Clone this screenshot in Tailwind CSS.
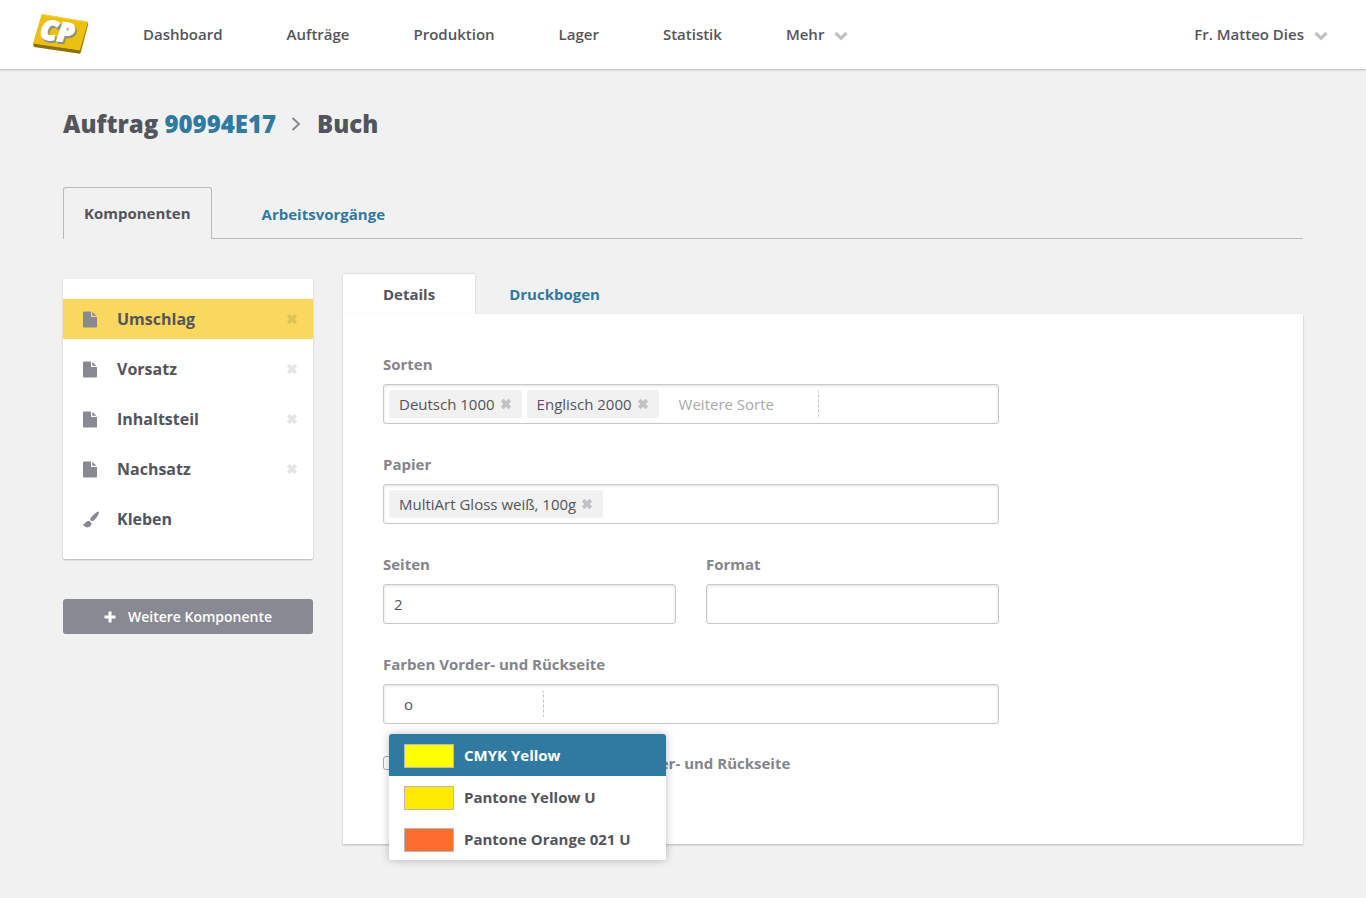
<!DOCTYPE html>
<html lang="de">
<head>
<meta charset="utf-8">
<meta name="viewport" content="width=device-width, initial-scale=1">
<title>Auftrag 90994E17 – Buch</title>
<script src="https://cdn.jsdelivr.net/npm/@tailwindcss/browser@4"></script>
</head>
<body class="min-h-screen bg-[#f1f1f1] font-['Open_Sans',sans-serif] text-[15px] leading-5 text-[#54545c]">

<svg class="hidden" aria-hidden="true">
  <symbol id="x" viewBox="0 0 11 11"><path d="M2 2l7 7M9 2l-7 7" fill="none" stroke="currentColor" stroke-width="3.4"/></symbol>
  <symbol id="chevron" viewBox="0 0 14 10"><path d="M1.500 2L7 7.300L12.500 2" fill="none" stroke="currentColor" stroke-width="3.200"/></symbol>
  <symbol id="doc" viewBox="0 0 14 17"><path d="M1 0.500h7v5.500h6v9.500a1 1 0 0 1-1 1H1a1 1 0 0 1-1-1V1.500a1 1 0 0 1 1-1z" fill="currentColor"/><path d="M9.300 0.800v4h4.200z" fill="currentColor"/></symbol>
</svg>

<header class="flex h-[69px] items-center bg-white pr-[38px] pb-0.5 pl-8 font-semibold shadow-[0_1px_2px_rgba(0,0,0,0.25)]">
  <a href="#" aria-label="CP" class="mr-[54px]">
    <svg class="block h-11 w-[57px]" viewBox="32 12 57 44">
      <polygon points="33,43 80,50 80,53.800 34,47" fill="#8a7100"/>
      <polygon points="87.500,21.700 88.300,24 80.500,53.800 79.300,50" fill="#a38500"/>
      <polygon points="41.700,14 88,21.700 79.800,50.300 33,43.500" fill="#ebc012"/>
      <path d="M42 14.500L87.500 22" stroke="#f5d64c" stroke-width="1"/>
      <g font-family="Open Sans, sans-serif" font-weight="800" font-style="italic" font-size="27" transform="rotate(7 60 32)">
        <text x="42" y="43" fill="#8d8d90" stroke="#8d8d90" stroke-width="1.500">CP</text>
        <text x="40.500" y="41.200" fill="#fff" stroke="#fff" stroke-width="1.200">CP</text>
      </g>
    </svg>
  </a>
  <nav class="flex gap-16">
    <a href="#">Dashboard</a>
    <a href="#">Aufträge</a>
    <a href="#">Produktion</a>
    <a href="#">Lager</a>
    <a href="#">Statistik</a>
    <a href="#" class="flex items-center gap-2.5">Mehr <svg class="mt-1 h-2.5 w-3.5 text-[#c0c0c5]"><use href="#chevron"/></svg></a>
  </nav>
  <button type="button" class="ml-auto flex items-center gap-2.5 font-semibold">Fr. Matteo Dies <svg class="mt-1 h-2.5 w-3.5 text-[#c0c0c5]"><use href="#chevron"/></svg></button>
</header>

<main class="px-[63px] pt-[39px] pb-[53px]">
  <h1 class="flex items-center text-2xl font-extrabold">
    <span>Auftrag <a href="#" class="text-[#3079a1]">90994E17</a></span>
    <svg class="mr-4 ml-[15px] h-4 w-2.5" viewBox="0 0 10 16" fill="none" stroke="#84848d" stroke-width="1.800"><path d="M1.500 2l6.500 6-6.500 6"/></svg>
    <span>Buch</span>
  </h1>

  <nav class="mt-[47px] flex font-bold">
    <a href="#" class="flex h-[52px] items-center rounded-t-[3px] border border-b-0 border-[#b9b9b9] px-5 pb-0.5">Komponenten</a>
    <div class="flex grow items-center border-b border-[#b9b9b9] pt-0.5 pl-[50px]"><a href="#" class="text-[#3079a1]">Arbeitsvorgänge</a></div>
  </nav>

  <div class="mt-[35px] flex items-start gap-[30px]">
    <aside class="mt-[5px] w-[250px] shrink-0">
      <ul class="flex flex-col gap-2.5 rounded-xs bg-white py-5 text-base font-bold shadow-[0_1px_2px_rgba(0,0,0,0.25)]">
        <li class="flex h-10 items-center bg-[#fad860] px-5"><svg class="mr-5 h-[17px] w-3.5 text-[#898993]"><use href="#doc"/></svg><a href="#" class="grow">Umschlag</a><button type="button" aria-label="Umschlag entfernen" class="-mr-[5px]"><svg class="size-3 text-[#e1c256]"><use href="#x"/></svg></button></li>
        <li class="flex h-10 items-center px-5"><svg class="mr-5 h-[17px] w-3.5 text-[#898993]"><use href="#doc"/></svg><a href="#" class="grow">Vorsatz</a><button type="button" aria-label="Vorsatz entfernen" class="-mr-[5px]"><svg class="size-3 text-[#e5e5e5]"><use href="#x"/></svg></button></li>
        <li class="flex h-10 items-center px-5"><svg class="mr-5 h-[17px] w-3.5 text-[#898993]"><use href="#doc"/></svg><a href="#" class="grow">Inhaltsteil</a><button type="button" aria-label="Inhaltsteil entfernen" class="-mr-[5px]"><svg class="size-3 text-[#e5e5e5]"><use href="#x"/></svg></button></li>
        <li class="flex h-10 items-center px-5"><svg class="mr-5 h-[17px] w-3.5 text-[#898993]"><use href="#doc"/></svg><a href="#" class="grow">Nachsatz</a><button type="button" aria-label="Nachsatz entfernen" class="-mr-[5px]"><svg class="size-3 text-[#e5e5e5]"><use href="#x"/></svg></button></li>
        <li class="flex h-10 items-center px-5"><svg class="mr-[18px] h-[17px] w-4 text-[#898993]" viewBox="0 0 16 17" fill="currentColor"><path d="M15.700 0.700c0.600 0.600 0.200 1.800-0.600 3.200-1.300 2.300-3 4.700-4.600 5.800-0.800 0.500-1.200 0.500-1.700 0.300-0.700-0.300-1.300-1-1.500-1.600-0.100-0.500 0-0.900 0.400-1.500C9 5 11.500 2.500 13.600 1.200c1-0.600 1.700-0.900 2.100-0.500z"/><path d="M6.400 9.700c0.300 1 1.100 1.700 2.200 2 0 2.700-1.600 4.600-4.300 4.700C2 16.500 0.500 15 0 12.800c1 0.500 1.700 0.400 2.100-0.500 0.700-1.700 2.300-2.700 4.300-2.600z"/></svg><a href="#">Kleben</a></li>
      </ul>
      <button type="button" class="mt-10 flex h-[35px] w-full items-center justify-center gap-3 rounded-[3px] bg-[#898993] text-sm font-semibold text-white"><svg class="size-3" viewBox="0 0 12 12" fill="none" stroke="currentColor" stroke-width="3"><path d="M6 0.500v11M0.500 6h11"/></svg>Weitere Komponente</button>
    </aside>

    <section class="min-w-0 grow">
      <nav class="flex font-bold">
        <a href="#" class="flex h-10 items-center bg-white px-10 shadow-[0_0_2px_rgba(0,0,0,0.2)]">Details</a>
        <a href="#" class="flex h-10 items-center px-[34px] text-[#3079a1]">Druckbogen</a>
      </nav>
      <form class="relative bg-white px-10 pt-10 pb-[70px] shadow-[0_1px_2px_rgba(0,0,0,0.25)]">
        <div class="flex max-w-[616px] flex-col gap-[30px]">
          <div>
            <label for="sorten" class="mb-2.5 block font-bold text-[#84848d]">Sorten</label>
            <div class="flex h-10 items-center gap-[5px] rounded-[3px] border border-[#c8c8c8] px-[5px] shadow-[inset_0_1px_3px_rgba(0,0,0,0.12)]">
              <span class="flex h-7 items-center gap-[5px] rounded-[3px] bg-[#f1f1f1] px-2.5">Deutsch 1000<button type="button" aria-label="Deutsch 1000 entfernen"><svg class="size-3 text-[#c0c0c5]"><use href="#x"/></svg></button></span>
              <span class="flex h-7 items-center gap-[5px] rounded-[3px] bg-[#f1f1f1] px-2.5">Englisch 2000<button type="button" aria-label="Englisch 2000 entfernen"><svg class="size-3 text-[#c0c0c5]"><use href="#x"/></svg></button></span>
              <input id="sorten" placeholder="Weitere Sorte" class="h-7 w-[155px] rounded-[3px] border-r border-dashed border-[#c0c0c5] pl-[15px] placeholder:text-[#aaaaaa]">
            </div>
          </div>
          <div>
            <label for="papier" class="mb-2.5 block font-bold text-[#84848d]">Papier</label>
            <div class="flex h-10 items-center gap-[5px] rounded-[3px] border border-[#c8c8c8] px-[5px] shadow-[inset_0_1px_3px_rgba(0,0,0,0.12)]">
              <span class="flex h-7 items-center gap-[5px] rounded-[3px] bg-[#f1f1f1] px-2.5">MultiArt Gloss weiß, 100g<button type="button" aria-label="Papier entfernen"><svg class="size-3 text-[#c0c0c5]"><use href="#x"/></svg></button></span>
              <input id="papier" class="h-7 min-w-0 grow outline-none">
            </div>
          </div>
          <div class="grid grid-cols-2 gap-[30px]">
            <div>
              <label for="seiten" class="mb-2.5 block font-bold text-[#84848d]">Seiten</label>
              <input id="seiten" value="2" class="block h-10 w-full rounded-[3px] border border-[#c8c8c8] px-2.5 shadow-[inset_0_1px_3px_rgba(0,0,0,0.12)]">
            </div>
            <div>
              <label for="format" class="mb-2.5 block font-bold text-[#84848d]">Format</label>
              <input id="format" class="block h-10 w-full rounded-[3px] border border-[#c8c8c8] px-2.5 shadow-[inset_0_1px_3px_rgba(0,0,0,0.12)]">
            </div>
          </div>
          <div class="relative">
            <label for="farben" class="mb-2.5 block font-bold text-[#84848d]">Farben Vorder- und Rückseite</label>
            <div class="flex h-10 items-center rounded-[3px] border border-[#c8c8c8] px-[5px] shadow-[inset_0_1px_3px_rgba(0,0,0,0.12)]">
              <input id="farben" value="o" role="combobox" aria-expanded="true" aria-controls="farbliste" class="h-7 w-[155px] rounded-[3px] border-r border-dashed border-[#c0c0c5] pl-[15px]">
            </div>
            <ul id="farbliste" role="listbox" class="absolute top-full left-1.5 z-10 mt-2.5 w-[277px] overflow-hidden rounded-[3px] bg-white font-bold shadow-[0_0_8px_rgba(0,0,0,0.25)]">
              <li role="option" aria-selected="true" class="flex h-[42px] items-center gap-2.5 bg-[#3079a1] px-[15px] text-white"><span class="mt-0.5 h-6 w-[50px] border border-[#b9b9b9] bg-[#ffff00]"></span>CMYK Yellow</li>
              <li role="option" aria-selected="false" class="flex h-[42px] items-center gap-2.5 px-[15px]"><span class="mt-0.5 h-6 w-[50px] border border-[#b9b9b9] bg-[#ffe900]"></span>Pantone Yellow U</li>
              <li role="option" aria-selected="false" class="flex h-[42px] items-center gap-2.5 px-[15px]"><span class="mt-0.5 h-6 w-[50px] border border-[#b9b9b9] bg-[#ff6c2f]"></span>Pantone Orange 021 U</li>
            </ul>
          </div>
          <label class="-mt-px mb-px flex items-center gap-3.5 font-bold text-[#84848d]"><input type="checkbox" class="size-3.5 appearance-none rounded-[3px] border border-[#aaaaaa] bg-white">Unterschiedliche Farben für Vorder- und Rückseite</label>
        </div>
      </form>
    </section>
  </div>
</main>
</body>
</html>
